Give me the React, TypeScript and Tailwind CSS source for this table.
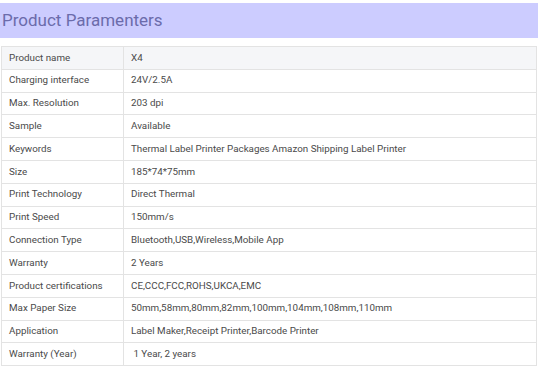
const rows: [string, string][] = [
  ["Product name", "X4"],
  ["Charging interface", "24V/2.5A"],
  ["Max. Resolution", "203 dpi"],
  ["Sample", "Available"],
  ["Keywords", "Thermal Label Printer Packages Amazon Shipping Label Printer"],
  ["Size", "185*74*75mm"],
  ["Print Technology", "Direct Thermal"],
  ["Print Speed", "150mm/s"],
  ["Connection Type", "Bluetooth,USB,Wireless,Mobile App"],
  ["Warranty", "2 Years"],
  ["Product certifications", "CE,CCC,FCC,ROHS,UKCA,EMC"],
  ["Max Paper Size", "50mm,58mm,80mm,82mm,100mm,104mm,108mm,110mm"],
  ["Application", "Label Maker,Receipt Printer,Barcode Printer"],
  ["Warranty (Year)", " 1 Year, 2 years"],
];

export default function App() {
  return (
    <div className="w-[540px] h-[368px] bg-white overflow-hidden font-['Roboto',sans-serif]">
      <div className="pt-[3px] pr-[2px]">
        <h2 className="h-[35px] bg-[#ccccff] pl-[2px] flex items-center text-[17px] leading-none text-[#6b6bab]">
          Product Paramenters
        </h2>
      </div>

      <div className="mt-[8px] ml-[1px] mr-[3px]">
        <table className="w-full border-collapse text-[9.8px] text-[#4a4a4a]">
          <tbody>
            {rows.map(([k, v], i) => (
              <tr key={i} className={i === 0 ? "bg-[#f5f6f8]" : "bg-white"}>
                <td className="w-[122px] h-[22.8px] border border-[#e3e3e3] pl-[7px] py-0 whitespace-nowrap">
                  {k}
                </td>
                <td className="h-[22.8px] border border-[#e3e3e3] pl-[7px] py-0 whitespace-pre">
                  {v}
                </td>
              </tr>
            ))}
          </tbody>
        </table>
      </div>
    </div>
  );
}
